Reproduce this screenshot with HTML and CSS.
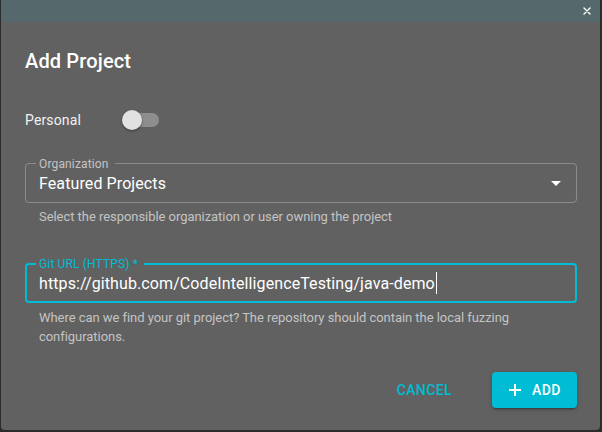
FILE: index.html
```html
<!DOCTYPE html>
<html>
<head>
<meta charset="utf-8">
<link rel="stylesheet" href="styles.css">
</head>
<body>
<div class="dialog">
  <div class="topbar">
    <svg class="close" width="8" height="8" viewBox="0 0 8 8"><path d="M1 1L7 7M7 1L1 7" stroke="#fff" stroke-width="1.4" stroke-linecap="round"/></svg>
  </div>
  <div class="content">
    <h2 class="title">Add Project</h2>
    <div class="switch-row">
      <span class="switch-label">Personal</span>
      <span class="switch">
        <span class="track"></span>
        <span class="thumb"></span>
      </span>
    </div>
    <div class="field">
      <span class="field-label">Organization</span>
      <span class="field-value">Featured Projects</span>
      <svg class="arrow" width="10" height="5" viewBox="0 0 10 5"><path d="M0 0H10L5 5Z" fill="#fff"/></svg>
    </div>
    <div class="helper">Select the responsible organization or user owning the project</div>
    <div class="field field-focused">
      <span class="field-label">Git URL (HTTPS) *</span>
      <span class="field-value">https://github.com/CodeIntelligenceTesting/java-demo<span class="caret"></span></span>
    </div>
    <div class="helper helper-wide">Where can we find your git project? The repository should contain the local fuzzing configurations.</div>
    <div class="actions">
      <button class="btn btn-text">Cancel</button>
      <button class="btn btn-primary">
        <svg width="14" height="14" viewBox="0 0 14 14"><path d="M7 1V13M1 7H13" stroke="#fff" stroke-width="2"/></svg>
        <span>Add</span>
      </button>
    </div>
  </div>
</div>
</body>
</html>
```
FILE: styles.css
```css
html, body {
  margin: 0;
  padding: 0;
  background: #2c2c2c;
  font-family: Roboto, "Liberation Sans", sans-serif;
}
.dialog {
  margin-left: 1px;
  width: 599px;
  height: 430px;
  background: #616161;
  border-radius: 0 0 4px 4px;
  overflow: hidden;
}
.topbar {
  height: 22px;
  background: #55696c;
  display: flex;
  justify-content: flex-end;
  align-items: center;
  padding-right: 9px;
}
.close {
  display: block;
}
.content {
  padding: 0 23px 0 24px;
  display: flex;
  flex-direction: column;
}
.title {
  margin: 23px 0 0;
  font-size: 20px;
  font-weight: 500;
  line-height: 32px;
  color: #fff;
  letter-spacing: 0.15px;
}
.switch-row {
  margin-top: 24px;
  height: 38px;
  display: flex;
  align-items: center;
  gap: 41px;
}
.switch-label {
  font-size: 14px;
  color: #f2f2f2;
  letter-spacing: 0.15px;
}
.switch {
  position: relative;
  width: 37px;
  height: 20px;
  display: flex;
  align-items: center;
}
.track {
  margin-left: 2px;
  width: 35px;
  height: 14px;
  border-radius: 7px;
  background: #8e8e8e;
}
.thumb {
  position: absolute;
  left: 0;
  top: 0;
  width: 20px;
  height: 20px;
  border-radius: 50%;
  background: #e1e1e1;
  box-shadow: 0 1px 3px rgba(0,0,0,0.4);
}
.field {
  position: relative;
  margin-top: 24px;
  height: 40px;
  box-sizing: border-box;
  border: 1px solid #8c8c8c;
  border-radius: 4px;
  padding: 0 14px 0 13px;
  display: flex;
  align-items: center;
}
.field-label {
  position: absolute;
  left: 10px;
  top: -8px;
  padding: 0 6px 0 3px;
  background: #616161;
  font-size: 12px;
  line-height: 16px;
  color: #c4c4c4;
  letter-spacing: 0.15px;
}
.field-value {
  flex: 1;
  font-size: 16px;
  color: #fff;
  letter-spacing: 0.1px;
  display: flex;
  align-items: center;
}
.arrow {
  margin-right: 1px;
}
.helper {
  margin: 4px 14px 0 14px;
  font-size: 13px;
  line-height: 20px;
  color: #c4c4c4;
  letter-spacing: -0.05px;
}
.field-focused {
  margin-top: 36px;
  border: 2px solid #00bcd4;
  padding-left: 12px;
}
.field-focused .field-label {
  left: 9px;
  top: -9px;
  color: #00bcd4;
}
.caret {
  display: inline-block;
  width: 1px;
  height: 22px;
  background: #fff;
  margin-left: 1px;
}
.helper-wide {
  margin-top: 5px;
  margin-right: 50px;
  line-height: 19px;
}
.actions {
  margin-top: 26px;
  display: flex;
  justify-content: flex-end;
  align-items: center;
  gap: 32px;
}
.btn {
  font-family: Roboto, "Liberation Sans", sans-serif;
  font-size: 14px;
  font-weight: 500;
  text-transform: uppercase;
  letter-spacing: 0.4px;
  border: none;
  border-radius: 4px;
  height: 36px;
  padding: 0 8px;
  cursor: pointer;
}
.btn-text {
  background: transparent;
  color: #00bcd4;
}
.btn-primary {
  background: #00bcd4;
  color: #fff;
  width: 85px;
  display: flex;
  align-items: center;
  justify-content: center;
  gap: 10px;
  padding: 0 16px;
  box-shadow: 0 3px 1px -2px rgba(0,0,0,0.2), 0 2px 2px 0 rgba(0,0,0,0.14), 0 1px 5px 0 rgba(0,0,0,0.12);
}
```
